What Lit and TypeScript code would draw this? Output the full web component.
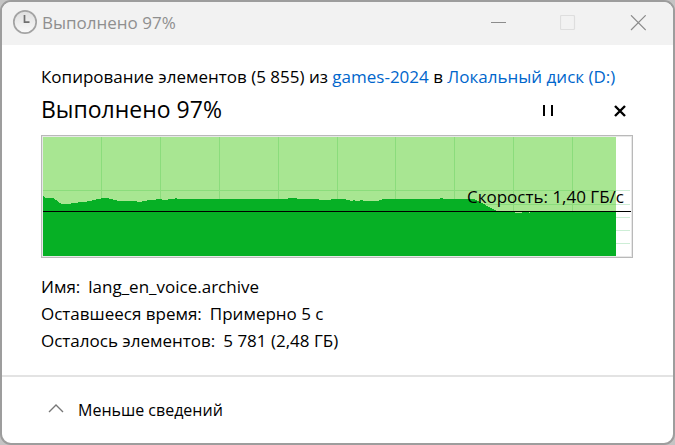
import { LitElement, html, css, svg } from "lit";
import { customElement } from "lit/decorators.js";

/** Throughput samples as [x, y] steps on a 588 x 119 plot. */
const STEPS: [number, number][] = [
  [0, 59], [1, 60], [2, 61], [11, 62], [12, 63], [14, 64], [15, 65], [16, 66], [18, 67],
  [28, 66], [35, 65], [44, 64], [49, 63], [53, 62], [58, 61], [66, 62], [70, 63], [74, 64],
  [94, 65], [99, 64], [104, 63], [113, 62], [119, 63], [125, 62], [132, 61], [134, 62],
  [245, 61], [254, 62], [276, 63], [288, 62], [303, 63], [307, 64], [310, 63], [312, 64],
  [317, 63], [320, 64], [336, 63], [339, 62], [397, 61], [400, 62], [432, 63], [434, 64],
  [436, 65], [438, 66], [440, 67], [442, 68], [443, 69], [445, 70], [447, 71], [449, 72],
  [451, 73], [453, 74], [472, 76], [479, 75], [486, 76], [487, 75],
];
const DONE_X = 573;
const COLUMNS = [58, 117, 176, 235, 294, 352, 411, 470, 529];
const ROWS = [53, 67, 80, 93, 106];

const areaPath = () =>
  "M0 119" + STEPS.map(([x, y]) => `H${x}V${y}`).join("") + `H${DONE_X}V119Z`;

@customElement("speed-chart")
export class SpeedChart extends LitElement {
  static styles = css`
    :host { display: block; position: relative; border: 1px solid #b9b9b9; }
    .plot { display: block; box-sizing: border-box; width: 100%; height: 121px; border: 1px solid #e8e8e8; }
    .speed { position: absolute; right: 8px; top: 49px; line-height: 24px; white-space: nowrap; }
  `;
  render() {
    return html`
      <svg class="plot" viewBox="0 0 588 119" preserveAspectRatio="none" shape-rendering="crispEdges" aria-hidden="true">
        <rect width="588" height="119" fill="#fff" />
        ${ROWS.map((y) => svg`<rect x="0" y=${y} width="587" height="1" fill="#cdeed6" />`)}
        <rect width=${DONE_X} height="119" fill="#a8e692" />
        ${COLUMNS.map((x) => svg`<rect x=${x} y="0" width="1" height="119" fill="#8bdc7c" />`)}
        <rect x="0" y="53" width=${DONE_X} height="1" fill="#8bdc7c" />
        <rect x="430" y="67" width=${DONE_X - 430} height="1" fill="#8bdc7c" />
        <path d=${areaPath()} fill="#06b025" />
        <rect y="74" width="588" height="1" fill="#000" />
      </svg>
      <span class="speed">Скорость: 1,40 ГБ/с</span>
    `;
  }
}

@customElement("app-root")
export class AppRoot extends LitElement {
  static styles = css`
    :host {
      display: block;
      box-sizing: border-box;
      min-height: 100vh;
      background: #c4c4c4;
      font: 17px/27px "Open Sans", "Noto Sans", sans-serif;
      color: #000;
    }
    .window {
      box-sizing: border-box;
      min-height: 100vh;
      display: flex;
      flex-direction: column;
      border: 2px solid #9d9d9d;
      border-radius: 11px;
      background: #fff;
      overflow: hidden;
    }
    button {
      display: flex;
      align-items: center;
      justify-content: center;
      padding: 0;
      border: 0;
      background: none;
      font: inherit;
      color: inherit;
    }
    svg { display: block; }
    .title-bar {
      display: flex;
      align-items: flex-start;
      height: 43px;
      padding-left: 10px;
      background: #f2f2f2;
      color: #8f8f8f;
    }
    .clock { margin-top: 7px; }
    .title { flex: 1; margin-left: 4px; line-height: 42px; }
    .title-bar button { width: 70px; height: 42px; }
    .body { padding: 18px 40px 20px 39px; flex: 1; }
    .summary { margin: 0; }
    a { color: #0066cc; text-decoration: none; }
    .progress { display: flex; align-items: center; height: 38px; margin-bottom: 7px; }
    h1 { flex: 1; margin: 0; font-size: 23px; line-height: 38px; font-weight: 400; }
    .progress button { width: 24px; height: 24px; }
    .actions { display: flex; gap: 48px; padding: 4px 1px 0 0; }
    .details { margin: 15px 0 0; }
    .row { display: flex; gap: 8px; }
    dt, dd { margin: 0; }
    .footer { border-top: 2px solid #e3e3e3; padding: 20px 45px 19px; }
    .footer button { gap: 13px; font-size: 16px; }
  `;
  render() {
    return html`
      <main class="window">
        <header class="title-bar">
          <svg class="clock" width="26" height="26" viewBox="0 0 26 26" aria-hidden="true">
            <defs>
              <linearGradient id="face" x1="0" y1="0" x2="0" y2="1">
                <stop offset="0" stop-color="#dedede" /><stop offset="1" stop-color="#fafafa" />
              </linearGradient>
            </defs>
            <circle cx="13" cy="13" r="11.2" fill="url(#face)" stroke="#a3a3a3" stroke-width="1.7" />
            <path d="M12.5 6V13.2H17.5" fill="none" stroke="#707070" stroke-width="1.7" />
          </svg>
          <span class="title">Выполнено 97%</span>
          <button aria-label="Свернуть">
            <svg width="16" height="16"><path d="M1 7.5H16" stroke="#8c8c8c" /></svg>
          </button>
          <button aria-label="Развернуть" disabled>
            <svg width="16" height="16"><rect x=".5" y=".5" width="14" height="14" rx="1" fill="none" stroke="#dedede" stroke-width="1.2" /></svg>
          </button>
          <button aria-label="Закрыть">
            <svg width="16" height="16"><path d="M1 .3L15.7 15M15.7 .3L1 15" stroke="#8c8c8c" stroke-width="1.2" /></svg>
          </button>
        </header>
        <section class="body">
          <p class="summary">Копирование элементов (5 855) из <a href="#source">games-2024</a> в <a href="#target">Локальный диск (D:)</a></p>
          <div class="progress">
            <h1>Выполнено 97%</h1>
            <div class="actions">
              <button aria-label="Приостановить">
                <svg width="12" height="12" shape-rendering="crispEdges"><path d="M1 0H3V11H1ZM9 0H11V11H9Z" /></svg>
              </button>
              <button aria-label="Отменить">
                <svg width="12" height="12"><path d="M1 1L11 11M11 1L1 11" stroke="#000" stroke-width="2.4" /></svg>
              </button>
            </div>
          </div>
          <speed-chart></speed-chart>
          <dl class="details">
            <div class="row"><dt>Имя:</dt><dd>lang_en_voice.archive</dd></div>
            <div class="row"><dt>Оставшееся время:</dt><dd>Примерно 5 с</dd></div>
            <div class="row"><dt>Осталось элементов:</dt><dd>5 781 (2,48 ГБ)</dd></div>
          </dl>
        </section>
        <footer class="footer">
          <button aria-expanded="true">
            <svg width="18" height="16"><path d="M2 9L9 2L16 9" fill="none" stroke="#777" stroke-width="1.4" /></svg>
            <span>Меньше сведений</span>
          </button>
        </footer>
      </main>
    `;
  }
}
